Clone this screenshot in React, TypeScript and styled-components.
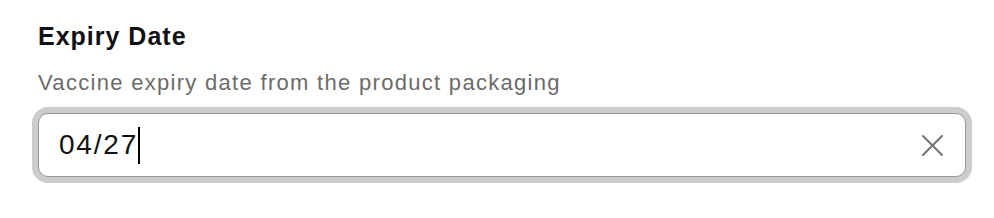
import React from 'react';
import styled, { createGlobalStyle } from 'styled-components';

const GlobalStyle = createGlobalStyle`
  body {
    margin: 0;
    background: #ffffff;
    font-family: "Liberation Sans", Arial, sans-serif;
  }
`;

const Page = styled.div`
  box-sizing: border-box;
  min-height: 100vh;
  padding: 22px 28px 40px 38px;
`;

const Field = styled.div`
  display: flex;
  flex-direction: column;
`;

const Label = styled.div`
  font-size: 25px;
  font-weight: 700;
  color: #111111;
  line-height: 28px;
  letter-spacing: 1px;
`;

const Hint = styled.div`
  margin-top: 20px;
  font-size: 22px;
  color: #6b6b6b;
  line-height: 26px;
  letter-spacing: 1.3px;
`;

const InputBox = styled.div`
  box-sizing: border-box;
  margin-top: 17px;
  height: 64px;
  border: 1px solid #969696;
  border-radius: 10px;
  box-shadow: 0 0 0 6px #cccccc;
  background: #ffffff;
  display: flex;
  align-items: center;
  padding: 0 22px 0 20px;
`;

const Value = styled.div`
  flex: 1;
  display: flex;
  align-items: center;
  font-size: 28px;
  color: #111111;
  letter-spacing: 1.8px;
`;

const Caret = styled.span`
  display: inline-block;
  width: 2px;
  height: 37px;
  background: #000000;
`;

const ClearButton = styled.button`
  border: none;
  background: none;
  padding: 0;
  width: 22px;
  height: 22px;
  display: flex;
  align-items: center;
  justify-content: center;
  cursor: pointer;
`;

const App = () => {
  return (
    <>
      <GlobalStyle />
      <Page>
        <Field>
          <Label>Expiry Date</Label>
          <Hint>Vaccine expiry date from the product packaging</Hint>
          <InputBox>
            <Value>
              04/27
              <Caret />
            </Value>
            <ClearButton aria-label="Clear">
              <svg width="21" height="21" viewBox="0 0 21 21">
                <path
                  d="M1 1 L20 20 M20 1 L1 20"
                  stroke="#737373"
                  strokeWidth="2"
                  strokeLinecap="round"
                />
              </svg>
            </ClearButton>
          </InputBox>
        </Field>
      </Page>
    </>
  );
};

export default App;
